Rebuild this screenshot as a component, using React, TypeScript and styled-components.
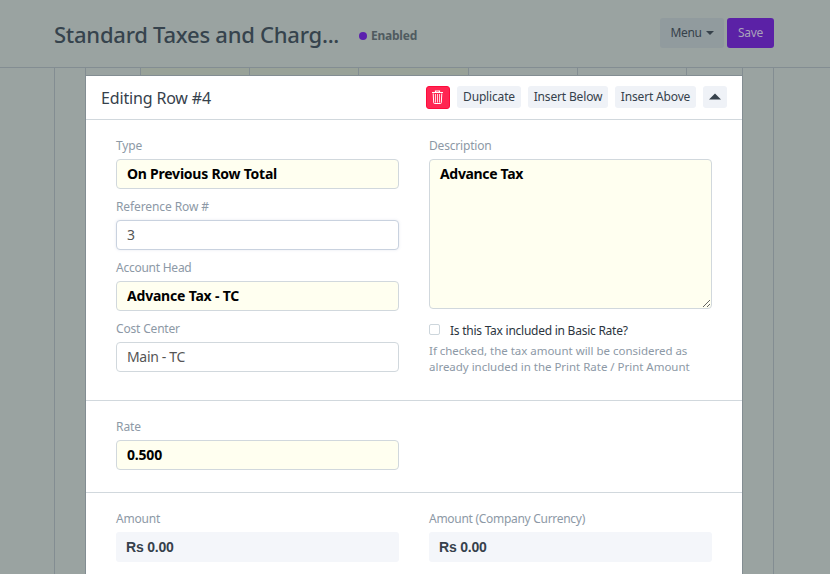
import React from 'react';
import styled, { createGlobalStyle, css } from 'styled-components';

const line = '#d1d8dd';
const dimLine = '#838d92';
const sans = '"Noto Sans", sans-serif';

const GlobalStyle = createGlobalStyle`
  * { box-sizing: border-box; }
  body {
    margin: 0;
    background: #9aa3a1;
    font-family: ${sans};
    font-size: 12px;
    letter-spacing: -0.18px;
    color: #36414c;
    overflow: hidden;
  }
`;

const Page = styled.div`
  display: flex;
  flex-direction: column;
  height: 574px;
  overflow: hidden;
`;

const PageHead = styled.header`
  flex: none;
  display: flex;
  align-items: center;
  height: 68px;
  padding: 0 56px 2px 54px;
  border-bottom: 1px solid ${dimLine};
`;

const Title = styled.h1`
  margin: 2px 0 0;
  width: 305px;
  font-size: 22px;
  line-height: 30px;
  font-weight: 500;
  letter-spacing: -0.25px;
  color: #36434d;
  white-space: nowrap;
`;

const Status = styled.span`
  display: flex;
  align-items: center;
  gap: 4px;
  margin-top: 6px;
  font-weight: 700;
  line-height: 16px;
  letter-spacing: -0.23px;
  color: #505b60;

  &::before {
    content: '';
    width: 8px;
    height: 8px;
    border-radius: 50%;
    background: #5b1fae;
  }
`;

const HeadActions = styled.div`
  display: flex;
  gap: 3px;
  margin-left: auto;
`;

const HeadButton = styled.button<{ $primary?: boolean }>`
  display: flex;
  align-items: center;
  justify-content: center;
  gap: 4px;
  width: ${p => (p.$primary ? 47 : 64)}px;
  height: 30px;
  padding: 0;
  border: 0;
  border-radius: 3px;
  font: 400 12px/16px ${sans};
  letter-spacing: -0.33px;
  background: ${p => (p.$primary ? '#5b21a6' : '#919b9e')};
  color: ${p => (p.$primary ? '#a9a2ba' : '#36414a')};
`;

const Panel = styled.main`
  flex: 1;
  display: flex;
  flex-direction: column;
  width: 720px;
  margin-left: 54px;
  padding: 0 30px;
  border: solid ${dimLine};
  border-width: 0 1px;
  min-height: 0;
`;

const GridRow = styled.div`
  flex: none;
  display: grid;
  grid-template-columns: 55px 109px 109px 110px 109px 109px 57px;
  height: 7px;
`;

const GridCell = styled.div<{ $required?: boolean }>`
  border-left: 1px solid ${dimLine};
  background: ${p => (p.$required ? '#99a298' : 'transparent')};

  &:last-child { border-right: 1px solid ${dimLine}; }
`;

const RowForm = styled.section`
  flex: none;
  border: 1px solid ${dimLine};
  background: #fff;
`;

const FormHead = styled.div`
  display: flex;
  align-items: flex-start;
  gap: 7px;
  height: 44px;
  padding: 10px 15px 0;
  border-bottom: 1px solid ${line};
`;

const FormTitle = styled.h2`
  flex: 1;
  margin: 0;
  font-size: 16px;
  line-height: 24px;
  font-weight: 400;
  letter-spacing: -0.16px;
`;

const SmallButton = styled.button<{ $w: number; $danger?: boolean }>`
  display: flex;
  align-items: center;
  justify-content: center;
  width: ${p => p.$w}px;
  height: 22px;
  padding: 0;
  border: 0;
  border-radius: 3px;
  background: #eff2f7;
  color: #36414c;
  font: 400 12px/16px ${sans};
  letter-spacing: -0.16px;
  white-space: nowrap;
  ${p => p.$danger && css`
    height: 23px;
    padding-right: 2px;
    border: 1px solid #ff0b3c;
    background: #ff2652;
    color: #fff;
  `}
`;

const Section = styled.div<{ $h: number }>`
  display: grid;
  grid-template-columns: 283px 283px;
  column-gap: 30px;
  align-items: start;
  height: ${p => p.$h}px;
  padding: 17px 30px 0;
  border-bottom: 1px solid ${line};
`;

const Column = styled.div`
  display: flex;
  flex-direction: column;
  gap: 9px;
`;

const Field = styled.div``;

const Label = styled.label<{ $track?: number }>`
  display: block;
  height: 18px;
  margin-bottom: 4px;
  line-height: 18px;
  letter-spacing: ${p => p.$track ?? -0.18}px;
  color: #8d99a6;
`;

const control = css<{ $required?: boolean; $track?: number }>`
  display: block;
  width: 100%;
  border: 1px solid ${line};
  border-radius: 4px;
  outline: none;
  font: ${p => (p.$required ? 700 : 400)} 14px/20px ${sans};
  letter-spacing: ${p => p.$track ?? -0.2}px;
  background: ${p => (p.$required ? '#fffff0' : '#fff')};
  color: ${p => (p.$required ? '#000' : '#555')};
`;

const Input = styled.input<{ $required?: boolean; $track?: number; $active?: boolean }>`
  ${control}
  height: 30px;
  padding: 0 10px 2px;
  ${p => p.$active && css`
    border-color: #c9d2df;
    box-shadow: 0 0 3px rgba(120, 140, 180, 0.18);
  `}
`;

const TextArea = styled.textarea<{ $required?: boolean; $track?: number }>`
  ${control}
  height: 150px;
  padding: 4px 10px;
  resize: vertical;
`;

const Value = styled.div`
  height: 30px;
  padding: 0 10px;
  border-radius: 3px;
  background: #f4f6fa;
  font: 700 14px/30px "Liberation Sans", sans-serif;
  letter-spacing: -0.2px;
  color: #36414c;
`;

const CheckRow = styled.label`
  display: flex;
  align-items: center;
  gap: 10px;
  height: 18px;
  margin-top: 4px;
  line-height: 18px;
  letter-spacing: -0.25px;
  color: #2c353e;
`;

const Box = styled.input`
  appearance: none;
  width: 11px;
  height: 11px;
  margin: -3px 0 0;
  border: 1px solid #cdd6dc;
  border-radius: 2px;
  background: #fff;
`;

const Help = styled.p`
  margin: 3px 0 0;
  font-size: 11.5px;
  line-height: 16px;
  letter-spacing: -0.02px;
  white-space: nowrap;
  color: #8d99a6;
`;

const Trash = () => (
  <svg width="13" height="15" viewBox="0 0 13 15" fill="none" stroke="currentColor">
    <path d="M1 2.5h11M4.5 2.2V1h4v1.2" strokeWidth="1.2" />
    <path d="M2.2 3.5l.5 9.2q0 .8.8.8h6q.8 0 .8-.8l.5-9.2" strokeWidth="1" />
    <path d="M4.5 4v8.5M6.5 4v8.5M8.5 4v8.5" strokeWidth=".8" />
  </svg>
);

const Caret = () => (
  <svg width="8" height="4" viewBox="0 0 8 4" fill="currentColor">
    <path d="M0 0h8L4 4z" />
  </svg>
);

const UpTriangle = () => (
  <svg width="12" height="9" viewBox="0 0 12 9" fill="currentColor">
    <path d="M0 6.6 6 .6l6 6z" />
  </svg>
);

const gridColumns = [false, true, true, true, false, false, false];

export default function App() {
  return (
    <Page>
      <GlobalStyle />
      <PageHead>
        <Title>Standard Taxes and Charg...</Title>
        <Status>Enabled</Status>
        <HeadActions>
          <HeadButton>Menu <Caret /></HeadButton>
          <HeadButton $primary>Save</HeadButton>
        </HeadActions>
      </PageHead>
      <Panel>
        <GridRow>
          {gridColumns.map((required, i) => <GridCell key={i} $required={required} />)}
        </GridRow>
        <RowForm>
          <FormHead>
            <FormTitle>Editing Row #4</FormTitle>
            <SmallButton $w={24} $danger aria-label="Delete"><Trash /></SmallButton>
            <SmallButton $w={64}>Duplicate</SmallButton>
            <SmallButton $w={80}>Insert Below</SmallButton>
            <SmallButton $w={81}>Insert Above</SmallButton>
            <SmallButton $w={24} aria-label="Collapse"><UpTriangle /></SmallButton>
          </FormHead>
          <Section $h={281}>
            <Column>
              <Field>
                <Label>Type</Label>
                <Input $required $track={-0.24} defaultValue="On Previous Row Total" />
              </Field>
              <Field>
                <Label $track={-0.1}>Reference Row #</Label>
                <Input $active defaultValue="3" />
              </Field>
              <Field>
                <Label $track={-0.25}>Account Head</Label>
                <Input $required defaultValue="Advance Tax - TC" />
              </Field>
              <Field>
                <Label>Cost Center</Label>
                <Input $track={-0.33} defaultValue="Main - TC" />
              </Field>
            </Column>
            <Column>
              <Field>
                <Label>Description</Label>
                <TextArea $required $track={-0.33} spellCheck={false} defaultValue="Advance Tax" />
              </Field>
              <Field>
                <CheckRow><Box type="checkbox" />Is this Tax included in Basic Rate?</CheckRow>
                <Help>
                  If checked, the tax amount will be considered as<br />
                  already included in the Print Rate / Print Amount
                </Help>
              </Field>
            </Column>
          </Section>
          <Section $h={92}>
            <Field>
              <Label $track={-0.07}>Rate</Label>
              <Input $required defaultValue="0.500" />
            </Field>
          </Section>
          <Section $h={142}>
            <Column>
              <Field>
                <Label>Amount</Label>
                <Value>Rs 0.00</Value>
              </Field>
              <Field>
                <Label>Total</Label>
                <Value>Rs 0.00</Value>
              </Field>
            </Column>
            <Column>
              <Field>
                <Label $track={-0.29}>Amount (Company Currency)</Label>
                <Value>Rs 0.00</Value>
              </Field>
              <Field>
                <Label $track={-0.29}>Total (Company Currency)</Label>
                <Value>Rs 0.00</Value>
              </Field>
            </Column>
          </Section>
        </RowForm>
      </Panel>
    </Page>
  );
}
